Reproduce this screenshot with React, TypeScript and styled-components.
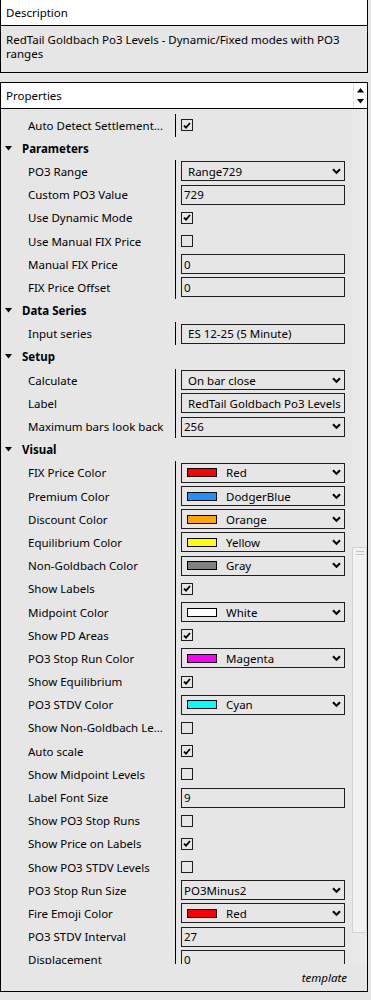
import React from 'react';
import styled, { createGlobalStyle } from 'styled-components';

const GlobalStyle = createGlobalStyle`
  html, body { margin: 0; padding: 0; background: #e6e6e6; }
  body { font-family: "Noto Sans", "Segoe UI", sans-serif; font-size: 11.5px; color: #000; }
  * { box-sizing: border-box; }
`;

const Page = styled.div`
  width: 371px;
  height: 1000px;
  overflow: hidden;
  background: #e6e6e6;
  display: flex;
  flex-direction: column;
`;

const DescPanel = styled.section`
  width: 368px;
  border: 1px solid #000;
  border-top: none;
  display: flex;
  flex-direction: column;
`;

const PanelHeader = styled.div`
  height: 26px;
  background: #fff;
  border-bottom: 1px solid #000;
  display: flex;
  align-items: center;
  padding-left: 5px;
`;

const DescBody = styled.div`
  height: 46px;
  padding: 7px 20px 0 5px;
  line-height: 14px;
  background: #e6e6e6;
`;

const PropsFrame = styled.section`
  margin-top: 9px;
  width: 368px;
  height: 910px;
  border: 1px solid #000;
  display: flex;
  flex-direction: column;
`;

const PropsHeader = styled(PanelHeader)`
  padding-right: 0;
  justify-content: space-between;
`;

const Spin = styled.div`
  width: 14px;
  height: 100%;
  border-left: 1px solid #e2e2e2;
  display: flex;
  flex-direction: column;
  align-items: center;
  justify-content: center;
  gap: 6px;
`;

const ListArea = styled.div`
  height: 855px;
  display: flex;
  overflow: hidden;
`;

const Content = styled.div`
  flex: 1;
  padding-top: 4.5px;
  overflow: hidden;
`;

const Track = styled.div`
  width: 15px;
  background: #e9e9e9;
  padding-top: 438px;
`;

const Thumb = styled.div`
  height: 386px;
  background: #f1f1f1;
  border: 1px solid #d3d3d3;
  display: flex;
  flex-direction: column;
  align-items: center;
  padding-top: 3px;
  gap: 2px;
`;

const Grip = styled.div`
  width: 8px;
  height: 1px;
  background: #c4c4c4;
`;

const Footer = styled.div`
  height: 27px;
  display: flex;
  align-items: center;
  justify-content: flex-end;
  padding-right: 20px;
  font-style: italic;
`;

const Row = styled.div`
  height: 23.2px;
  display: grid;
  grid-template-columns: 174px 1fr;
  align-items: stretch;
`;

const LabelCell = styled.div`
  padding-left: 27px;
  display: flex;
  align-items: center;
  white-space: nowrap;
  overflow: hidden;
`;

const ValueCell = styled.div`
  border-left: 1px solid #000;
  padding-left: 5px;
  display: flex;
  align-items: center;
`;

const CategoryRow = styled.div`
  height: 23.2px;
  display: flex;
  align-items: center;
  padding-left: 4px;
  gap: 10px;
  font-weight: 700;
`;

const Box = styled.div<{ $wide?: boolean }>`
  width: 164px;
  height: 20px;
  border: 1px solid #1e1e1e;
  display: flex;
  align-items: center;
  padding-left: ${(p) => (p.$wide ? '6px' : '2px')};
  padding-right: 3px;
  white-space: nowrap;
  overflow: hidden;
`;

const BoxText = styled.span`
  flex: 1;
  overflow: hidden;
`;

const Swatch = styled.span<{ $color: string }>`
  width: 30px;
  height: 9px;
  border: 1px solid #000;
  background: ${(p) => p.$color};
  margin-left: 3px;
  margin-right: 9px;
  flex: none;
`;

const CheckBox = styled.div`
  width: 12px;
  height: 12px;
  border: 1px solid #1e1e1e;
  display: flex;
  align-items: center;
  justify-content: center;
`;

const Chevron = () => (
  <svg width="9" height="7" viewBox="0 0 9 7">
    <path d="M1 1.2 L4.5 4.8 L8 1.2" fill="none" stroke="#000" strokeWidth="2" />
  </svg>
);

const Tri = () => (
  <svg width="7" height="5" viewBox="0 0 7 5">
    <path d="M0 0 L7 0 L3.5 4.5 Z" fill="#000" />
  </svg>
);

type Item =
  | { kind: 'cat'; label: string }
  | { kind: 'bool'; label: string; on: boolean }
  | { kind: 'text'; label: string; value: string; wide?: boolean }
  | { kind: 'select'; label: string; value: string; wide?: boolean }
  | { kind: 'color'; label: string; color: string; name: string };

const items: Item[] = [
  { kind: 'bool', label: 'Auto Detect Settlement...', on: true },
  { kind: 'cat', label: 'Parameters' },
  { kind: 'select', label: 'PO3 Range', value: 'Range729', wide: true },
  { kind: 'text', label: 'Custom PO3 Value', value: '729' },
  { kind: 'bool', label: 'Use Dynamic Mode', on: true },
  { kind: 'bool', label: 'Use Manual FIX Price', on: false },
  { kind: 'text', label: 'Manual FIX Price', value: '0' },
  { kind: 'text', label: 'FIX Price Offset', value: '0' },
  { kind: 'cat', label: 'Data Series' },
  { kind: 'text', label: 'Input series', value: 'ES 12-25 (5 Minute)', wide: true },
  { kind: 'cat', label: 'Setup' },
  { kind: 'select', label: 'Calculate', value: 'On bar close', wide: true },
  { kind: 'text', label: 'Label', value: 'RedTail Goldbach Po3 Levels', wide: true },
  { kind: 'select', label: 'Maximum bars look back', value: '256' },
  { kind: 'cat', label: 'Visual' },
  { kind: 'color', label: 'FIX Price Color', color: '#ff0000', name: 'Red' },
  { kind: 'color', label: 'Premium Color', color: '#1e90ff', name: 'DodgerBlue' },
  { kind: 'color', label: 'Discount Color', color: '#ffa500', name: 'Orange' },
  { kind: 'color', label: 'Equilibrium Color', color: '#ffff00', name: 'Yellow' },
  { kind: 'color', label: 'Non-Goldbach Color', color: '#808080', name: 'Gray' },
  { kind: 'bool', label: 'Show Labels', on: true },
  { kind: 'color', label: 'Midpoint Color', color: '#ffffff', name: 'White' },
  { kind: 'bool', label: 'Show PD Areas', on: true },
  { kind: 'color', label: 'PO3 Stop Run Color', color: '#ff00ff', name: 'Magenta' },
  { kind: 'bool', label: 'Show Equilibrium', on: true },
  { kind: 'color', label: 'PO3 STDV Color', color: '#00ffff', name: 'Cyan' },
  { kind: 'bool', label: 'Show Non-Goldbach Le...', on: false },
  { kind: 'bool', label: 'Auto scale', on: true },
  { kind: 'bool', label: 'Show Midpoint Levels', on: false },
  { kind: 'text', label: 'Label Font Size', value: '9' },
  { kind: 'bool', label: 'Show PO3 Stop Runs', on: false },
  { kind: 'bool', label: 'Show Price on Labels', on: true },
  { kind: 'bool', label: 'Show PO3 STDV Levels', on: false },
  { kind: 'select', label: 'PO3 Stop Run Size', value: 'PO3Minus2' },
  { kind: 'color', label: 'Fire Emoji Color', color: '#ff0000', name: 'Red' },
  { kind: 'text', label: 'PO3 STDV Interval', value: '27' },
  { kind: 'text', label: 'Displacement', value: '0' },
];

const Value = ({ item }: { item: Item }) => {
  switch (item.kind) {
    case 'bool':
      return (
        <CheckBox>
          {item.on && (
            <svg width="8" height="7" viewBox="0 0 8 7">
              <path d="M1 3.6 L3 5.6 L7 1" fill="none" stroke="#000" strokeWidth="1.8" />
            </svg>
          )}
        </CheckBox>
      );
    case 'text':
      return (
        <Box $wide={item.wide}>
          <BoxText>{item.value}</BoxText>
        </Box>
      );
    case 'select':
      return (
        <Box $wide={item.wide}>
          <BoxText>{item.value}</BoxText>
          <Chevron />
        </Box>
      );
    case 'color':
      return (
        <Box>
          <Swatch $color={item.color} />
          <BoxText>{item.name}</BoxText>
          <Chevron />
        </Box>
      );
    default:
      return null;
  }
};

export default function App() {
  return (
    <Page>
      <GlobalStyle />
      <DescPanel>
        <PanelHeader>Description</PanelHeader>
        <DescBody>RedTail Goldbach Po3 Levels - Dynamic/Fixed modes with PO3 ranges</DescBody>
      </DescPanel>
      <PropsFrame>
        <PropsHeader>
          <span>Properties</span>
          <Spin>
            <svg width="7" height="5" viewBox="0 0 7 5">
              <path d="M0 4.5 L7 4.5 L3.5 0 Z" fill="#000" />
            </svg>
            <svg width="7" height="5" viewBox="0 0 7 5">
              <path d="M0 0 L7 0 L3.5 4.5 Z" fill="#000" />
            </svg>
          </Spin>
        </PropsHeader>
        <ListArea>
          <Content>
            {items.map((it, i) =>
              it.kind === 'cat' ? (
                <CategoryRow key={i}>
                  <Tri />
                  <span>{it.label}</span>
                </CategoryRow>
              ) : (
                <Row key={i}>
                  <LabelCell>{it.label}</LabelCell>
                  <ValueCell>
                    <Value item={it} />
                  </ValueCell>
                </Row>
              )
            )}
          </Content>
          <Track>
            <Thumb>
              <Grip />
              <Grip />
            </Thumb>
          </Track>
        </ListArea>
        <Footer>template</Footer>
      </PropsFrame>
    </Page>
  );
}
